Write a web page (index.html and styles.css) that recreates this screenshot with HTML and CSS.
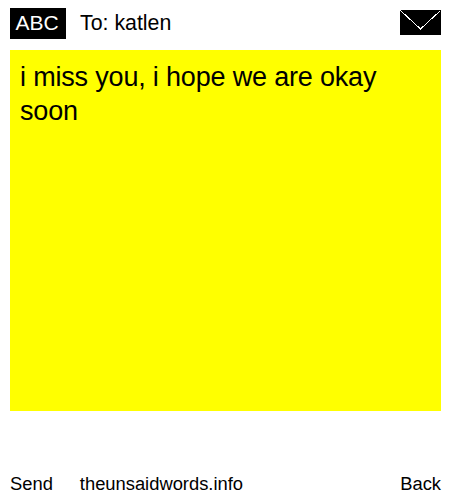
FILE: index.html
```html
<!DOCTYPE html>
<html lang="en">
<head>
  <meta charset="UTF-8" />
  <title>The Unsaid Words</title>
  <link rel="stylesheet" href="styles.css">
</head>
<body>
  <div class="top">
    <span class="abc">ABC</span>
    <span class="to">To: katlen</span>
    <svg class="envelope" width="41" height="25" viewBox="0 0 41 25" shape-rendering="crispEdges">
      <rect width="41" height="25" fill="#000" />
      <path d="M0.5 0.5 L20.5 19 L40.5 0.5" fill="none" stroke="#fff" stroke-width="1" />
    </svg>
  </div>
  <div class="note">i miss you, i hope we are okay soon</div>
  <div class="bottom">
    <a class="send" href="#">Send</a>
    <a class="site" href="#">theunsaidwords.info</a>
    <a class="back" href="#">Back</a>
  </div>
</body>
</html>
```

FILE: styles.css
```css
html, body {
  height: 100%;
}
body {
  margin: 0;
  padding: 8px 9px 6px 10px;
  box-sizing: border-box;
  display: flex;
  flex-direction: column;
  background: #fff;
  color: #000;
  font-family: "Liberation Sans", Arial, sans-serif;
}
.top {
  display: flex;
  align-items: center;
  height: 31px;
}
.abc {
  width: 56px;
  height: 31px;
  padding-right: 2px;
  box-sizing: border-box;
  line-height: 30px;
  text-align: center;
  background: #000;
  color: #fff;
  font-size: 21px;
}
.to {
  margin-left: 14px;
  font-size: 21.33px;
}
.envelope {
  margin-left: auto;
  margin-top: -2px;
}
.note {
  margin-top: 11px;
  height: 361px;
  padding: 10px;
  box-sizing: border-box;
  background: #ff0;
  font-size: 27px;
  letter-spacing: -0.18px;
  line-height: 34px;
}
.bottom {
  margin-top: auto;
  display: flex;
  font-size: 18.35px;
  line-height: 21px;
}
.bottom a {
  color: #000;
  text-decoration: none;
}
.site {
  margin-left: 27px;
}
.back {
  margin-left: auto;
}
```
